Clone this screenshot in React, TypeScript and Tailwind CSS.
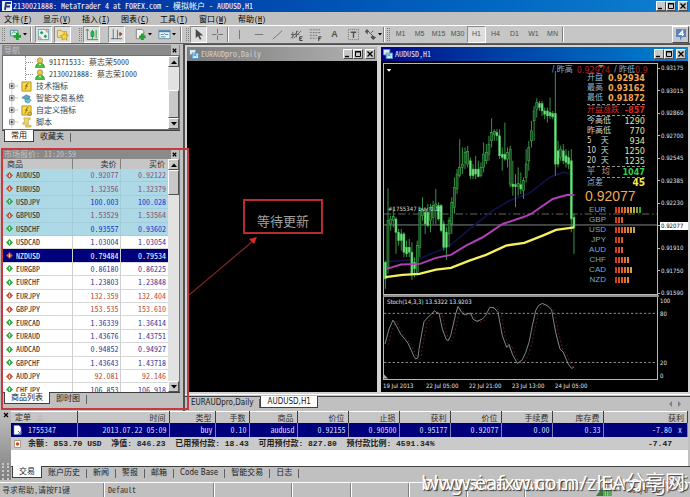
import type { ReactNode } from "react";
import clsx from "clsx";

const menus = ["文件(F)", "显示(V)", "插入(I)", "图表(C)", "工具(T)", "窗口(W)", "帮助(H)"];
const periods = ["M1", "M5", "M15", "M30", "H1", "H4", "D1", "W1", "MN"];

type Quote = { symbol: string; bid: string; ask: string; up: boolean; tone: string };

const quotes: Quote[] = [
  { symbol: "AUDUSD", bid: "0.92077", ask: "0.92122", up: false, tone: "mauve" },
  { symbol: "EURUSD", bid: "1.32356", ask: "1.32379", up: false, tone: "mauve" },
  { symbol: "USDJPY", bid: "100.003", ask: "100.028", up: true, tone: "blue" },
  { symbol: "GBPUSD", bid: "1.53529", ask: "1.53564", up: false, tone: "mauve" },
  { symbol: "USDCHF", bid: "0.93557", ask: "0.93602", up: true, tone: "blue" },
  { symbol: "USDCAD", bid: "1.03004", ask: "1.03054", up: true, tone: "navy" },
  { symbol: "NZDUSD", bid: "0.79484", ask: "0.79534", up: false, tone: "white" },
  { symbol: "EURGBP", bid: "0.86180", ask: "0.86225", up: true, tone: "navy" },
  { symbol: "EURCHF", bid: "1.23803", ask: "1.23848", up: true, tone: "navy" },
  { symbol: "EURJPY", bid: "132.359", ask: "132.404", up: false, tone: "red" },
  { symbol: "GBPJPY", bid: "153.535", ask: "153.610", up: false, tone: "red" },
  { symbol: "EURCAD", bid: "1.36339", ask: "1.36414", up: true, tone: "navy" },
  { symbol: "EURAUD", bid: "1.43676", ask: "1.43751", up: true, tone: "navy" },
  { symbol: "AUDCAD", bid: "0.94852", ask: "0.94927", up: true, tone: "navy" },
  { symbol: "GBPCHF", bid: "1.43643", ask: "1.43718", up: true, tone: "navy" },
  { symbol: "AUDJPY", bid: "92.081", ask: "92.146", up: false, tone: "red" },
  { symbol: "CHFJPY", bid: "106.853", ask: "106.918", up: true, tone: "navy" },
];

const tones: Record<string, string> = {
  mauve: "text-[#8a5278]",
  blue: "text-[#1238d0]",
  navy: "text-[#3a3a9c]",
  red: "text-[#c0483c]",
  white: "text-white",
};

// high, low, body top, body bottom
const candles = [
  [600, 685, 605, 655], [383, 640, 480, 620], [465, 510, 475, 490], [440, 500, 468, 480],
  [470, 580, 475, 515], [505, 555, 515, 540], [505, 570, 520, 540], [515, 590, 520, 575],
  [540, 590, 560, 580], [535, 590, 560, 575], [545, 658, 575, 640], [590, 650, 605, 625],
  [540, 645, 555, 635], [440, 590, 450, 560], [410, 480, 445, 465], [440, 520, 455, 490],
  [430, 500, 455, 495], [430, 515, 440, 480], [420, 490, 435, 470], [385, 490, 430, 450],
  [425, 480, 435, 475], [430, 515, 435, 510], [480, 570, 490, 560], [500, 598, 515, 560],
  [470, 560, 480, 520], [410, 520, 425, 490], [350, 460, 380, 440], [325, 400, 340, 385],
  [235, 350, 320, 345], [260, 340, 310, 320], [260, 325, 275, 305], [255, 320, 272, 310],
  [290, 355, 300, 345], [310, 355, 325, 345], [285, 355, 325, 340], [300, 350, 325, 348],
  [305, 350, 320, 345], [245, 335, 280, 320], [250, 310, 275, 300], [225, 300, 250, 280],
  [172, 260, 215, 240], [205, 240, 212, 220], [205, 240, 215, 225], [205, 295, 225, 285],
  [260, 330, 280, 290], [185, 300, 280, 295], [260, 320, 275, 295], [255, 380, 265, 370],
  [300, 405, 370, 378], [340, 440, 372, 378], [320, 405, 368, 378], [335, 400, 372, 385],
  [350, 415, 360, 390], [265, 365, 310, 350], [240, 330, 260, 300], [180, 260, 210, 240],
  [135, 240, 150, 180], [112, 170, 125, 145], [120, 150, 128, 140], [120, 165, 128, 150],
  [140, 175, 150, 160], [140, 185, 150, 165], [110, 175, 155, 165], [150, 175, 158, 168],
  [30, 345, 158, 310], [240, 320, 270, 310], [255, 300, 265, 290], [250, 310, 270, 300],
  [265, 320, 285, 305], [270, 325, 290, 310], [265, 515, 300, 475], [460, 580, 470, 500],
];

const stoch =
  "28,175 40,130 52,103 62,120 75,145 97,172 115,212 120,220 127,215 130,190 137,150 145,108 158,93 168,85 176,75 184,82 190,82 200,130 212,162 218,164 225,150 240,85 247,62 258,80 266,87 285,82 292,100 304,107 320,100 330,90 342,65 355,66 367,80 380,150 393,185 400,176 410,205 425,233 440,222 450,200 460,170 470,120 480,75 488,60 500,53 515,60 528,73 540,140 553,190 562,198 578,235 588,248 595,243";

const priceScale = ["0.93175", "0.93015", "0.92860", "0.92700", "0.92545", "0.92385", "0.92230", "0.92077", "0.91910", "0.91750", "0.91590"];
const timeScale = ["19 Jul 2013", "22 Jul 05:00", "22 Jul 21:00", "23 Jul 13:00", "24 Jul 05:00"];

const strengths: [string, number][] = [
  ["EUR", 9], ["GBP", 3], ["USD", 7], ["JPY", 3], ["AUD", 3], ["CHF", 5], ["CAD", 6], ["NZD", 5],
];
const barColors = [
  "bg-[#d83a20]", "bg-[#dc4820]", "bg-[#e05a28]", "bg-[#e07030]", "bg-[#dc8838]",
  "bg-[#d8a040]", "bg-[#c0a840]", "bg-[#70a838]", "bg-[#38a038]",
];

const orderHead = ["定单", "时间", "类型", "手数", "商品", "价位", "止损", "获利", "价位", "手续费", "库存费", "获利"];
const orderRow = ["1755347", "2013.07.22 05:09", "buy", "0.10", "audusd", "0.92155", "0.90500", "0.95177", "0.92077", "0.00", "0.33", "-7.80"];
const orderCols = ["w-[66px]", "w-[92px]", "w-[46px]", "w-[34px]", "w-[48px]", "w-[51px]", "w-[51px]", "w-[51px]", "w-[51px]", "w-[51px]", "w-[51px]", ""];

const raised = "border border-t-white border-l-white border-r-[#505050] border-b-[#505050] bg-[#c8c8c8]";
const dither = "bg-[#e2e2e2]";

const WinButtons = ({ name }: { name: string }) => (
  <div className="flex shrink-0 items-center text-black">
    <button aria-label={`${name} minimize`} className={clsx("h-[10px] w-[10px]", raised)}>
      <svg viewBox="0 0 8 8" className="block h-[8px] w-[8px]"><path d="M1 6.5h4" stroke="currentColor" strokeWidth="1.4" /></svg>
    </button>
    <button aria-label={`${name} maximize`} className={clsx("h-[10px] w-[10px]", raised)}>
      <svg viewBox="0 0 8 8" className="block h-[8px] w-[8px]"><path d="M1.5 1.5h5v5h-5zM1 2h6" fill="none" stroke="currentColor" /></svg>
    </button>
    <button aria-label={`${name} close`} className={clsx("ml-[2px] h-[10px] w-[10px]", raised)}>
      <svg viewBox="0 0 8 8" className="block h-[8px] w-[8px]"><path d="M1.5 1.5l5 5M6.5 1.5l-5 5" stroke="currentColor" strokeWidth="1.3" /></svg>
    </button>
  </div>
);

const ScrollButton = ({ down }: { down?: boolean }) => (
  <button aria-label={down ? "scroll down" : "scroll up"} className={clsx("flex h-[11px] w-full shrink-0 items-center justify-center", raised)}>
    <svg viewBox="0 0 6 4" className="h-[4px] w-[6px]"><path d={down ? "M0 0h6L3 3.5z" : "M0 4h6L3 .5z"} /></svg>
  </button>
);

const PaneHeader = ({ title }: { title: string }) => (
  <div className="flex h-[10px] shrink-0 items-center justify-between bg-[#8a8a8a] pr-px pl-[2px] leading-[10px] text-[#c4c4c4]">
    <span>{title}</span>
    <button aria-label={`${title} 关闭`} className="flex h-full w-[8px] items-center bg-[#c0c0c0] text-black">
      <svg viewBox="0 0 8 8" className="w-[7px]"><path d="M2 2l4 4M6 2l-4 4" stroke="currentColor" strokeWidth="1.4" /></svg>
    </button>
  </div>
);

const Tabs = ({ items, active, className }: { items: string[]; active: number; className?: string }) => (
  <div className={clsx("flex h-[14px] shrink-0 items-stretch border-t border-[#404040] bg-[#c0c0c0] font-['DejaVu_Sans_Condensed','Noto_Sans_CJK_SC',sans-serif] text-[8px] leading-[12px] text-[#202020]", className)}>
    {items.map((item, i) => (
      <div key={item} className="flex">
        <button
          className={clsx("h-[12px] px-[6px] whitespace-nowrap", i === active && "-mt-px border-r border-b border-l border-[#404040] bg-white")}>
          {item}
        </button>
        {i !== active && <span className="my-[2px] w-px bg-[#606060]" />}
      </div>
    ))}
  </div>
);

const Tool = ({ label, pressed, drop, className, children }: { label: string; pressed?: boolean; drop?: boolean; className?: string; children: ReactNode }) => (
  <button
    aria-label={label}
    className={clsx(
      "flex h-[17px] shrink-0 items-center justify-center",
      pressed ? "w-[17px] border border-t-[#8c8c8c] border-r-white border-b-white border-l-[#8c8c8c] bg-[#dedede]" : "border border-transparent",
      className
    )}>
    <svg viewBox="0 0 14 14" className="h-[13px] w-[13px] shrink-0" fill="none" stroke="#707070">{children}</svg>
    {drop && <svg viewBox="0 0 4 3" className="ml-px h-[3px] w-[4px]"><path d="M0 0h4L2 2.5z" /></svg>}
  </button>
);

const Grip = () => <span className="mx-px h-[13px] w-[3px] shrink-0 border-x border-dotted border-[#808080]" />;
const Sep = ({ className }: { className?: string }) => (
  <span className={clsx("h-[15px] w-[2px] shrink-0 border-l border-[#808080] bg-white", className)} />
);

const Toolbar = () => (
  <div className="flex h-[19px] shrink-0 items-center border-t border-b border-t-white border-b-[#606060] bg-[#c6c6c6] pl-px">
    <Grip />
    <Tool label="新图表" drop className="w-[24px]">
      <path d="M1.500 2.500h8v6h-8z" fill="#d8ecf4" stroke="#5088a0" /><path d="M3 6l2-2 2 1" stroke="#309048" />
      <path d="M9 5v8M5 9h8" stroke="#18a828" strokeWidth="3" />
    </Tool>
    <Sep className="mr-[3px]" />
    <Tool label="市场报价" pressed>
      <path d="M1.500 1.500h11v11h-11z" fill="#e8f4f8" stroke="#70a0b0" />
      <path d="M3 5l2-2 2 2-2 2zM7 9l2-2 2 2-2 2z" fill="#28a048" stroke="none" />
      <path d="M9 3h2v2M3 9v2h2" stroke="#c08040" />
    </Tool>
    <Tool label="导航" pressed className="ml-[2px]">
      <path d="M1.500 2.500h4l1 1.500h5v6h-10z" fill="#f4e090" stroke="#c09830" />
      <path d="M9 5l1.300 2.700 3 .3-2.200 2 .6 3L9 11.600 6.300 13l.6-3-2.200-2 3-.3z" fill="#f8d838" stroke="#c89018" strokeWidth=".8" />
    </Tool>
    <span className="w-[7px] shrink-0" />
    <Grip />
    <Tool label="自动滚动" pressed>
      <path d="M2.500 1v11.500H14M1 3l1.500-2L4 3" stroke="#508070" />
      <path d="M8 2v10" stroke="#18983a" /><path d="M6.500 4h3v5h-3z" fill="#30b850" stroke="#18983a" /><path d="M12 2v9" stroke="#18983a" />
    </Tool>
    <Tool label="图表平移" pressed className="ml-[8px]">
      <path d="M3.500 1v11M1 11.500h12M8 2v10" stroke="#587080" /><path d="M9 6.500h3M10.500 4.500l2.500 2-2.500 2z" fill="#904838" stroke="#904838" strokeWidth=".7" />
    </Tool>
    <Tool label="指标" drop className="ml-[8px] w-[20px]">
      <path d="M2.500 1.500h6l2 2v8h-8z" fill="#f4f4f4" stroke="#808080" />
      <path d="M9 13v-7m-3.500 3.500h7" stroke="#18a828" strokeWidth="3" />
    </Tool>
    <Tool label="模板" drop className="ml-[4px] w-[20px]">
      <path d="M1 2.500h12v9H1z" fill="#e8f0f8" stroke="#6890a8" /><path d="M1 3.500h12" stroke="#4880b0" strokeWidth="2" />
      <path d="M3 7h3l1-1 1 1h3M3 9.500h5" stroke="#508890" />
    </Tool>
    <Sep className="mx-[3px]" />
    <Grip />
    <Tool label="光标" pressed>
      <path d="M4 1v10l2.500-2.300 2 4 1.700-.8-2-3.900H12z" fill="#484848" stroke="none" />
    </Tool>
    <Tool label="十字准线" className="w-[20px]"><path d="M7 1v5M7 8v5M1 7h5M8 7h5" /></Tool>
    <Sep />
    <Tool label="垂直线" className="w-[20px]"><path d="M7 2v10" /></Tool>
    <Tool label="水平线" className="w-[19px]"><path d="M3 7h9" /></Tool>
    <Tool label="趋势线" className="w-[19px]"><path d="M2 12L12 3" /></Tool>
    <Tool label="等距通道" className="w-[19px]">
      <path d="M1 11l8-8M4 11l8-8M1 7h9M3 4v7M7 3v7" stroke="#606060" /><path d="M13.500 9.500h-3v4h3M10.500 11.500h2" stroke="#303030" />
    </Tool>
    <Tool label="斐波纳契" className="w-[19px]">
      <path d="M1 2h12M1 5h12M1 8h8M1 11h7" strokeDasharray="2 1" /><path d="M10.500 14V9.500h3M10.500 11.500h2" stroke="#303030" />
    </Tool>
    <button className="w-[19px] text-center font-['Liberation_Sans',sans-serif] text-[9px] font-bold text-[#505050]">A</button>
    <Tool label="文字标签" className="w-[19px]">
      <path d="M1.500 1.500h11v11h-11z" strokeDasharray="1 1" /><path d="M4 4.500h6M7 4.500v6" stroke="#505050" strokeWidth="1.500" />
    </Tool>
    <Tool label="箭头" drop className="w-[20px]">
      <path d="M3 1l3 3H4v3L1 4zM9 8l4 2-3 3-3-3z" fill="#505050" stroke="none" /><path d="M4 3l6 6M8 5l2-2" stroke="#505050" />
    </Tool>
    <Sep className="mr-px" />
    <Grip />
    <div className="flex font-['Liberation_Sans',sans-serif] text-[7px] text-[#505050]">
      {periods.map((p) => (
        <button
          key={p}
          className={clsx("h-[17px] w-[19px] border", p === "H1" ? "border-t-[#8c8c8c] border-r-white border-b-white border-l-[#8c8c8c] bg-[#dedede]" : "border-transparent")}>
          {p}
        </button>
      ))}
    </div>
    <Sep />
    <button aria-label="消息 4" className={clsx("mr-px ml-auto flex h-[17px] w-[17px] items-center justify-center", raised)}>
      <svg viewBox="0 0 14 14" className="w-[14px]">
        <path d="M2 1h10v8H8l-2 4V9H2z" fill="#5c84bc" /><path d="M8.500 8V3L5.500 6.300H10" fill="none" stroke="#fff" strokeWidth="1.300" />
      </svg>
    </button>
  </div>
);

const FolderIcon = ({ kind }: { kind: number }) => (
  <svg viewBox="0 0 12 12" className="h-[11px] w-[11px] shrink-0">
    {kind === 1 ? (
      <>
        <path d="M1 5l5-3 4 2-1 2H2z" fill="#58a8c8" stroke="#2f7898" strokeWidth=".6" />
        <path d="M4 7l5-1 2 2-3 3-3-1z" fill="#78b8d0" stroke="#2f7898" strokeWidth=".6" />
      </>
    ) : kind === 3 ? (
      <>
        <path d="M3 1h7v2H8v5H2V6h2z" fill="#f0d868" stroke="#b89028" strokeWidth=".6" />
        <path d="M5 9h6v2H5z" fill="#f0d868" stroke="#b89028" strokeWidth=".6" />
      </>
    ) : (
      <>
        <path d="M1 1h10v10H1z" fill="#f4d848" stroke="#b89028" />
        <path d="M8 3c-2-.5-2 1-2.300 3S5 9 4 9M4.500 5.500h3" fill="none" stroke="#806010" />
        {kind === 2 && <circle cx="9.500" cy="9.500" r="2" fill="#e0b830" stroke="#806010" strokeWidth=".6" />}
      </>
    )}
  </svg>
);

const Navigator = () => (
  <section className="mr-[3px] ml-[2px]">
    <PaneHeader title="导航" />
    <div className="flex border border-[#707070] bg-white">
      <ul className="flex-1 overflow-hidden pb-px leading-[12px] text-[#404040]">
        {["91171533: 蔡志荣5000", "2130021888: 蔡志荣1000"].map((account) => (
          <li key={account} className="flex h-[12px] items-center pl-[22px]">
            <span className="mr-[2px] h-[12px] w-[8px] border-l border-dotted border-[#909090]">
              <span className="mt-[6px] block border-t border-dotted border-[#909090]" />
            </span>
            <svg viewBox="0 0 11 12" className="mr-[4px] h-[11px] w-[10px]">
              <path d="M.5 11.500C.5 8 3 6.500 5.500 6.500s5 1.500 5 5z" fill="#48c040" stroke="#187818" strokeWidth=".6" />
              <circle cx="5.500" cy="3.800" r="3" fill="#e8c850" stroke="#8a6818" strokeWidth=".6" />
              <path d="M4 7.500l1.500 2 1.500-2" fill="#e8f8e0" />
            </svg>
            {account}
          </li>
        ))}
        {["技术指标", "智能交易系统", "自定义指标", "脚本"].map((item, i) => (
          <li key={item} className="flex h-[12px] items-center pl-[6px]">
            <svg viewBox="0 0 12 12" className="mr-px h-[12px] w-[11px]">
              <path d="M.5 3.500h5v5h-5z" fill="#fff" stroke="#808080" /><path d="M1.500 6h3M3 4.500v3" stroke="#202020" />
              <path d="M7 6h4M3 0v3M3 9v3" stroke="#909090" strokeDasharray="1 1" />
            </svg>
            <FolderIcon kind={i} />
            <span className="ml-[4px]">{item}</span>
          </li>
        ))}
      </ul>
      <div className={clsx("flex w-[11px] flex-col", dither)}>
        <ScrollButton />
        <span className={clsx("mt-auto h-[28px]", raised)} />
        <ScrollButton down />
      </div>
    </div>
    <Tabs items={["常用", "收藏夹"]} active={0} className="pl-[2px]" />
  </section>
);

const MarketWatch = () => (
  <section className="relative mt-[5px] flex min-h-0 flex-1 flex-col pr-[3px] pl-[2px]">
    <PaneHeader title="市场报价: 11:20:59" />
    <div className="flex min-h-0 flex-1 border-x border-[#707070] bg-white">
      <div className="h-0 min-h-full flex-1 overflow-hidden">
        <table className="h-[238px] w-full border-collapse leading-[10px]">
          <thead>
            <tr className="bg-[#c6c6c6] text-[#303030]">
              <th className="h-[10px] border-r border-[#808080] p-0 pl-[4px] text-left font-normal">商品</th>
              <th className="w-[48px] border-r border-[#808080] p-0 pr-[3px] text-right font-normal">卖价</th>
              <th className="w-[48px] p-0 pr-[3px] text-right font-normal">买价</th>
            </tr>
          </thead>
          <tbody>
            {quotes.map((q, i) => (
              <tr
                key={q.symbol}
                className={clsx(
                  "border-b",
                  i < 5 ? "border-[#a4ccd8] bg-[#add8e6]" : "border-[#d8d8d8]",
                  q.tone === "white" ? "bg-[#00007c] text-white" : "text-[#303030]"
                )}>
                <td className={clsx("border-r p-0", i < 5 ? "border-[#a4ccd8]" : "border-[#d0d0d0]")}>
                  <span className="flex items-center gap-[3px] pl-[3px]">
                    <svg viewBox="0 0 8 8" className="h-[7px] w-[7px]">
                      <path d="M4 0l4 4-4 4-4-4z" fill={q.up ? "#28a038" : "#c04828"} />
                      <path d={q.up ? "M4 2v4M2.500 4L4 2.500 5.500 4" : "M4 2v4M2.500 4L4 5.500 5.500 4"} fill="none" stroke="#fff" strokeWidth=".8" />
                    </svg>
                    {q.symbol}
                  </span>
                </td>
                <td className={clsx("border-r p-0 pr-px text-right", i < 5 ? "border-[#a4ccd8]" : "border-[#d0d0d0]", tones[q.tone])}>{q.bid}</td>
                <td className={clsx("p-0 pr-[2px] text-right", tones[q.tone])}>{q.ask}</td>
              </tr>
            ))}
          </tbody>
        </table>
      </div>
      <div className={clsx("flex w-[11px] flex-col", dither)}>
        <ScrollButton />
        <span className={clsx("h-[25px]", raised)} />
        <span className="flex-1" />
        <ScrollButton down />
      </div>
    </div>
    <Tabs items={["商品列表", "即时图"]} active={0} className="pl-[2px]" />
    <div className="pointer-events-none absolute -top-px -right-[6px] -bottom-[4px] left-px z-10 border-2 border-[#c8383c]" />
  </section>
);

const ChartTitle = ({ title, active }: { title: string; active?: boolean }) => (
  <div className={clsx("flex h-[14px] items-center bg-linear-to-r px-[2px] text-[8px]", active ? "from-[#000088] to-[#1084d0] text-[#d8e4ff]" : "from-[#7c7c7c] to-[#b4b4b4] text-[#d0d0d0]")}>
    <svg viewBox="0 0 11 11" className="mr-[2px] h-[10px] w-[10px]">
      <path d="M.5.5h7v6h-7zM3.500 4.500h7v6h-7z" fill="#d8ecf8" stroke="#5090c0" /><path d="M5 8l1.500-1.500L8 8l1-1" fill="none" stroke="#5090c0" />
    </svg>
    <h2 className="mr-auto">{title}</h2>
    <WinButtons name={title} />
  </div>
);

const InfoRow = ({ label, value, labelClass, valueClass }: { label: string; value: string; labelClass: string; valueClass: string }) => (
  <div className="flex h-[10px] items-center justify-between whitespace-pre">
    <span className={labelClass}>{label}</span>
    <span className={clsx("text-[9px]", valueClass)}>{value}</span>
  </div>
);

const InfoPanel = () => (
  <div className="absolute top-[9px] right-[12px] w-[58px] text-[8px] leading-[10px]">
    <InfoRow label="开盘" value="0.92934" labelClass="text-[#8cb8dc]" valueClass="font-bold text-[#f0a850]" />
    <InfoRow label="最高" value="0.93162" labelClass="text-[#8cb8dc]" valueClass="font-bold text-[#f0a850]" />
    <InfoRow label="最低" value="0.91872" labelClass="text-[#8cb8dc]" valueClass="font-bold text-[#f0a850]" />
    <div className="mt-px border-y border-dashed border-[#909090]">
      <InfoRow label="开盘涨跌" value="-857" labelClass="text-[#d82828]" valueClass="font-bold text-[#d82828]" />
    </div>
    <InfoRow label="今高低" value="1290" labelClass="text-[#d8d8d0]" valueClass="text-[#e0e098]" />
    <InfoRow label="昨高低" value="770" labelClass="text-[#d8d8d0]" valueClass="text-[#e0e098]" />
    <InfoRow label="5    天" value="934" labelClass="text-[#d8d8d0]" valueClass="text-[#e0e098]" />
    <InfoRow label="10  天" value="1250" labelClass="text-[#d8d8d0]" valueClass="text-[#e0e098]" />
    <InfoRow label="20  天" value="1235" labelClass="text-[#d8d8d0]" valueClass="text-[#e0e098]" />
    <div className="border-y border-dashed border-[#909090]">
      <InfoRow label="平   均" value="1047" labelClass="text-[#d89878]" valueClass="font-bold text-[#30d048]" />
    </div>
    <div className="flex h-[10px] items-center justify-between text-[#8cb8dc]">
      点差<span className="text-[10px] font-bold text-[#f8e850]">45</span>
    </div>
    <p className="-ml-[2px] h-[17px] font-['Liberation_Sans',sans-serif] text-[14px] leading-[17px] text-[#f0a850]">0.92077</p>
    <ul className="font-['Liberation_Sans',sans-serif] text-[#78a8cc]">
      {strengths.map(([name, count]) => (
        <li key={name} className="flex h-[10px] items-center">
          <span className="w-[19px] text-right">{name}</span>
          <span className="ml-[9px] flex gap-px">
            {barColors.slice(0, count).map((c) => (
              <span key={c} className={clsx("h-[6px] w-[2px]", c)} />
            ))}
          </span>
        </li>
      ))}
    </ul>
  </div>
);

const PriceChart = () => (
  <div className="relative h-full overflow-hidden border border-[#b8b8b8]">
    <svg viewBox="24 9 819 693" preserveAspectRatio="none" className="absolute inset-0 h-full w-full">
      <path d="M32 24h14l-7 8z" fill="#fff" />
      <path d="M666 12h18l-9 9z" fill="#909090" />
      <path d="M24 460H843" stroke="#708070" strokeWidth="2.500" strokeDasharray="22 8 5 8" />
      <path d="M24 493H843" stroke="#98a0a0" strokeWidth="2.500" />
      <polyline points="30,603 80,600 130,595 200,565 225,552 300,490 350,450 400,420 460,398 520,350 560,335 590,340" fill="none" stroke="#10104c" strokeWidth="5" />
      {candles.map(([high, low, top, bottom], i) => {
        const x = 28 + i * 7.97;
        const rising = i > 0 && top < candles[i - 1][2];
        return (
          <g key={i}>
            <path d={`M${x} ${high}V${low}`} stroke="#38a048" strokeWidth="2.800" />
            <rect x={x - 3} y={top} width="6" height={bottom - top} fill={rising ? "#184820" : "#70e080"} stroke="#48c058" strokeWidth="1.500" />
          </g>
        );
      })}
      <polyline points="32,625 75,612 132,610 180,592 225,583 270,555 320,530 380,490 440,470 465,460 530,415 575,402 595,404" fill="none" stroke="#b040b8" strokeWidth="6" />
      <polyline points="28,650 80,643 130,640 180,627 225,622 280,600 330,583 390,555 445,547 500,525 540,508 595,500" fill="none" stroke="#f4f060" strokeWidth="7" />
    </svg>
    <span className="absolute top-[141px] left-[4px] text-[6px] leading-[8px] text-[#d0d8d0]">#1755347 buy 0.10</span>
    <p className="absolute top-0 left-[168px] flex h-[11px] w-[104px] items-center overflow-hidden text-[8px] whitespace-nowrap text-[#8cb8dc]">
      / 昨高<span className="ml-[4px] text-[9px] text-[#a82020]">0.92974</span>
      <span className="ml-[4px]">/ 昨低</span><span className="text-[9px] text-[#a82020]">0.9</span>
    </p>
    <InfoPanel />
  </div>
);

const AudusdChart = () => (
  <div className="flex flex-1 flex-col bg-black pt-[2px] pl-[2px] font-['DejaVu_Sans_Condensed','Noto_Sans_CJK_SC',sans-serif] text-[6px] leading-[8px] text-[#e4e4e4]">
    <div className="flex flex-[231_1_0%]">
      <div className="flex-1"><PriceChart /></div>
      <ul className="-mb-[2px] flex w-[30px] flex-col justify-between pt-px">
        {priceScale.map((p) => (
          <li key={p} className="flex items-center">
            <span className="w-[2px] border-t border-[#b8b8b8]" />
            <span className={clsx("pl-px", p === "0.92077" && "flex-1 bg-white text-black")}>{p}</span>
          </li>
        ))}
      </ul>
    </div>
    <div className="mr-[29px] h-[2px] bg-[#909090]" />
    <div className="flex flex-[82_1_0%]">
      <div className="relative flex-1 border border-t-0 border-[#b8b8b8]">
        <svg viewBox="25 34 819 244" preserveAspectRatio="none" className="absolute inset-0 h-full w-full" fill="none">
          <path d="M25 83H844M25 230H844" stroke="#a8a8a8" strokeWidth="2.500" strokeDasharray="7 6" />
          <polyline points={stoch} stroke="#702020" strokeWidth="2.500" strokeDasharray="6 6" transform="translate(9 3)" />
          <polyline points={stoch} stroke="#90a8a0" strokeWidth="2.500" />
          <path d="M25 266v12h12z" fill="#b0b0b0" />
        </svg>
        <span className="absolute top-px left-[3px] whitespace-nowrap">Stoch(14,3,3) 13.5322 13.9203</span>
      </div>
      <div className="flex w-[30px] flex-col pl-[2px]">
        <span className="flex-[12_1_0%]">100</span>
        <span className="flex-[49_1_0%]">80</span>
        <span className="flex-[13_1_0%]">20</span>
        <span className="h-[8px]">0</span>
      </div>
    </div>
    <div className="flex h-[12px] items-center">
      {timeScale.map((t) => (
        <span key={t} className="w-[43px] whitespace-nowrap">{t}</span>
      ))}
    </div>
  </div>
);

const Workspace = () => (
  <main className="flex min-w-0 flex-1 flex-col border-l-2 border-[#505050]">
    <div className="flex flex-1 border-t border-[#505050] bg-[#c8c8c8]">
      <section className="flex w-[194px] flex-col border-2 border-[#d4d4d4] border-b-[#d0d0d0]">
        <ChartTitle title="EURAUDpro,Daily" />
        <div className="relative flex-1 bg-black">
          <svg viewBox="0 0 80 66" className="absolute top-[172px] left-[2px] h-[66px] w-[80px]">
            <path d="M0 62L64 8" stroke="#802428" strokeWidth="1.200" /><path d="M68 4l-3 7-5-5z" fill="#e02828" />
          </svg>
          <div className="absolute top-[138px] left-[56px] flex h-[35px] w-[80px] items-center justify-center border-2 border-[#b82c30] pt-[8px] text-[13px] leading-[13px] text-[#a0a0a0]">
            等待更新
          </div>
        </div>
      </section>
      <section className="flex min-w-0 flex-1 flex-col border-2 border-[#d4d4d4]">
        <ChartTitle title="AUDUSD,H1" active />
        <AudusdChart />
      </section>
    </div>
    <div className="flex h-[17px] border-t border-white bg-[#c0c0c0] pt-px">
      <Tabs items={["EURAUDpro,Daily", "AUDUSD,H1"]} active={1} className="flex-1" />
      <div className="flex w-[22px] items-center gap-[6px] border-t border-[#404040]">
        <svg viewBox="0 0 4 6" className="w-[4px]"><path d="M4 0v6L1 3z" fill="#808080" /></svg>
        <svg viewBox="0 0 4 6" className="w-[4px]"><path d="M0 0v6l3-3z" fill="#808080" /></svg>
      </div>
    </div>
  </main>
);

const Terminal = () => (
  <section className="flex h-[69px] shrink-0 bg-[#c0c0c0]">
    <div className="flex w-[11px] flex-col items-center justify-between bg-linear-to-b from-[#c0c0c0] to-[#808080]">
      <button aria-label="关闭终端"><svg viewBox="0 0 8 8" className="w-[8px]"><path d="M2 2l4 4M6 2l-4 4" stroke="#000" strokeWidth="1.300" /></svg></button>
      <span className="h-[17px] w-[7px] border-x-2 border-dotted border-[#c8c8c8]" />
    </div>
    <div className="flex min-w-0 flex-1 flex-col">
      <div className="flex-1 border-r-2 border-[#c0c0c0] bg-white">
        <table className="w-full table-fixed border-collapse text-right">
          <thead>
            <tr className="h-[10px] bg-[#c6c6c6] leading-[10px] text-[#303030]">
              {orderHead.map((h, i) => (
                <th key={i} className={clsx("border-t border-r border-t-white border-r-[#404040] p-0 pr-[3px] font-normal", orderCols[i], i === 0 && "pl-[4px] text-left")}>
                  {h}
                  {i === 0 && <span className="pl-[6px] text-[6px] text-[#909090]">△</span>}
                </th>
              ))}
            </tr>
          </thead>
          <tbody>
            <tr className="h-[14px] bg-[#00007c] leading-[14px] text-[#d8dcf8]">
              {orderRow.map((c, i) => (
                <td key={i} className="border-r border-[#8080b0] p-0 pr-[2px] whitespace-nowrap">
                  {i === 0 ? (
                    <span className="flex items-center gap-[6px] pl-[2px]">
                      <svg viewBox="0 0 9 10" className="h-[10px] w-[9px]">
                        <path d="M1 .5h5l2 2v7H1z" fill="#fff" stroke="#80a0c8" strokeWidth=".6" /><path d="M5 6l3 3M8 6v3H5" fill="none" stroke="#3080c8" />
                      </svg>
                      {c}
                    </span>
                  ) : i === 11 ? (
                    <span className="flex justify-end gap-[6px] pr-[3px]">{c}<button aria-label="平仓">x</button></span>
                  ) : c}
                </td>
              ))}
            </tr>
          </tbody>
        </table>
        <div className="flex h-[13px] items-center bg-[#cacaca] pr-[16px] pl-[3px] font-['Liberation_Mono','Noto_Sans_CJK_SC',monospace] font-bold text-[#202020]">
          <svg viewBox="0 0 8 9" className="mr-[7px] h-[8px] w-[7px]">
            <path d="M.5.500h7v8h-7z" fill="#fff" stroke="#a09080" /><circle cx="4" cy="4.500" r="2" fill="#c85020" />
          </svg>
          <span className="whitespace-pre">余额: 853.70 USD  净值: 846.23  已用预付款: 18.43  可用预付款: 827.80  预付款比例: 4591.34%</span>
          <span className="ml-auto">-7.47</span>
        </div>
      </div>
      <Tabs items={["交易", "账户历史", "新闻", "警报", "邮箱", "Code Base", "智能交易", "日志"]} active={0} className="pl-px" />
    </div>
  </section>
);

const StatusBar = () => (
  <footer className="relative mt-[2px] flex h-[15px] shrink-0 items-center border-t border-white bg-[#c0c0c0] pl-[2px] text-[#303030]">
    <span className="w-[101px]">寻求帮助,请按F1键</span>
    <Sep />
    <span className="w-[108px] pl-[3px]">Default</span>
    <Sep className="mr-[76px]" />
    <Sep className="mr-[57px]" />
    <Sep className="mr-[56px]" />
    <Sep className="mr-[56px]" />
    <Sep className="mr-[56px]" />
    <Sep />
    <svg viewBox="0 0 16 12" className="ml-auto h-[12px] w-[16px]">
      <path d="M0 12l7-9v9z" fill="#387838" /><path d="M8 4v8M10.500 4v8M13 5v7M15 6v6" stroke="#38a038" strokeWidth="1.500" />
    </svg>
    <span className="pr-[30px] pl-[16px]">464/0 kb</span>
    <div className="pointer-events-none absolute right-0 bottom-px h-[26px] w-[269px] overflow-hidden font-['Noto_Sans','Noto_Sans_CJK_SC',sans-serif] text-[20px] leading-[26px] whitespace-nowrap text-white [text-shadow:1px_1px_1px_#404040]">
      <span className="absolute top-0 left-0">blog.sina.com.cn/zhurong86</span>
      <span className="absolute top-0 left-[2px]">www.eafxw.com</span>
      <span className="absolute top-0 right-[5px]">EA分享网</span>
    </div>
  </footer>
);

export default function App() {
  return (
    <div className="flex min-h-screen flex-col overflow-hidden bg-[#c0c0c0] font-['Noto_Sans_Mono_CJK_SC','Liberation_Mono','Noto_Sans_CJK_SC',monospace] text-[8px]">
      <header className="flex h-[12px] shrink-0 items-center bg-linear-to-r from-[#08249c] to-[#1080d0] px-[2px] leading-[12px] text-white">
        <svg viewBox="0 0 10 10" className="mr-px h-[10px] w-[10px]">
          <path d="M0 0h10v10H0z" fill="#e8eef8" /><path d="M3 9l1-7h5M3.500 5.500H8" fill="none" stroke="#203878" strokeWidth="1.800" />
        </svg>
        <h1 className="mr-auto whitespace-nowrap">2130021888: MetaTrader 4 at FOREX.com - 模拟帐户 - AUDUSD,H1</h1>
        <WinButtons name="MetaTrader" />
      </header>
      <nav className="flex h-[13px] shrink-0 items-center gap-[11px] pl-[4px] text-black">
        {menus.map((m) => (
          <button key={m}>{m.slice(0, 3)}<u>{m[3]}</u>)</button>
        ))}
      </nav>
      <Toolbar />
      <div className="flex flex-1">
        <aside className="flex w-[183px] shrink-0 flex-col pt-px pb-[5px]">
          <Navigator />
          <MarketWatch />
        </aside>
        <Workspace />
      </div>
      <Terminal />
      <StatusBar />
    </div>
  );
}
